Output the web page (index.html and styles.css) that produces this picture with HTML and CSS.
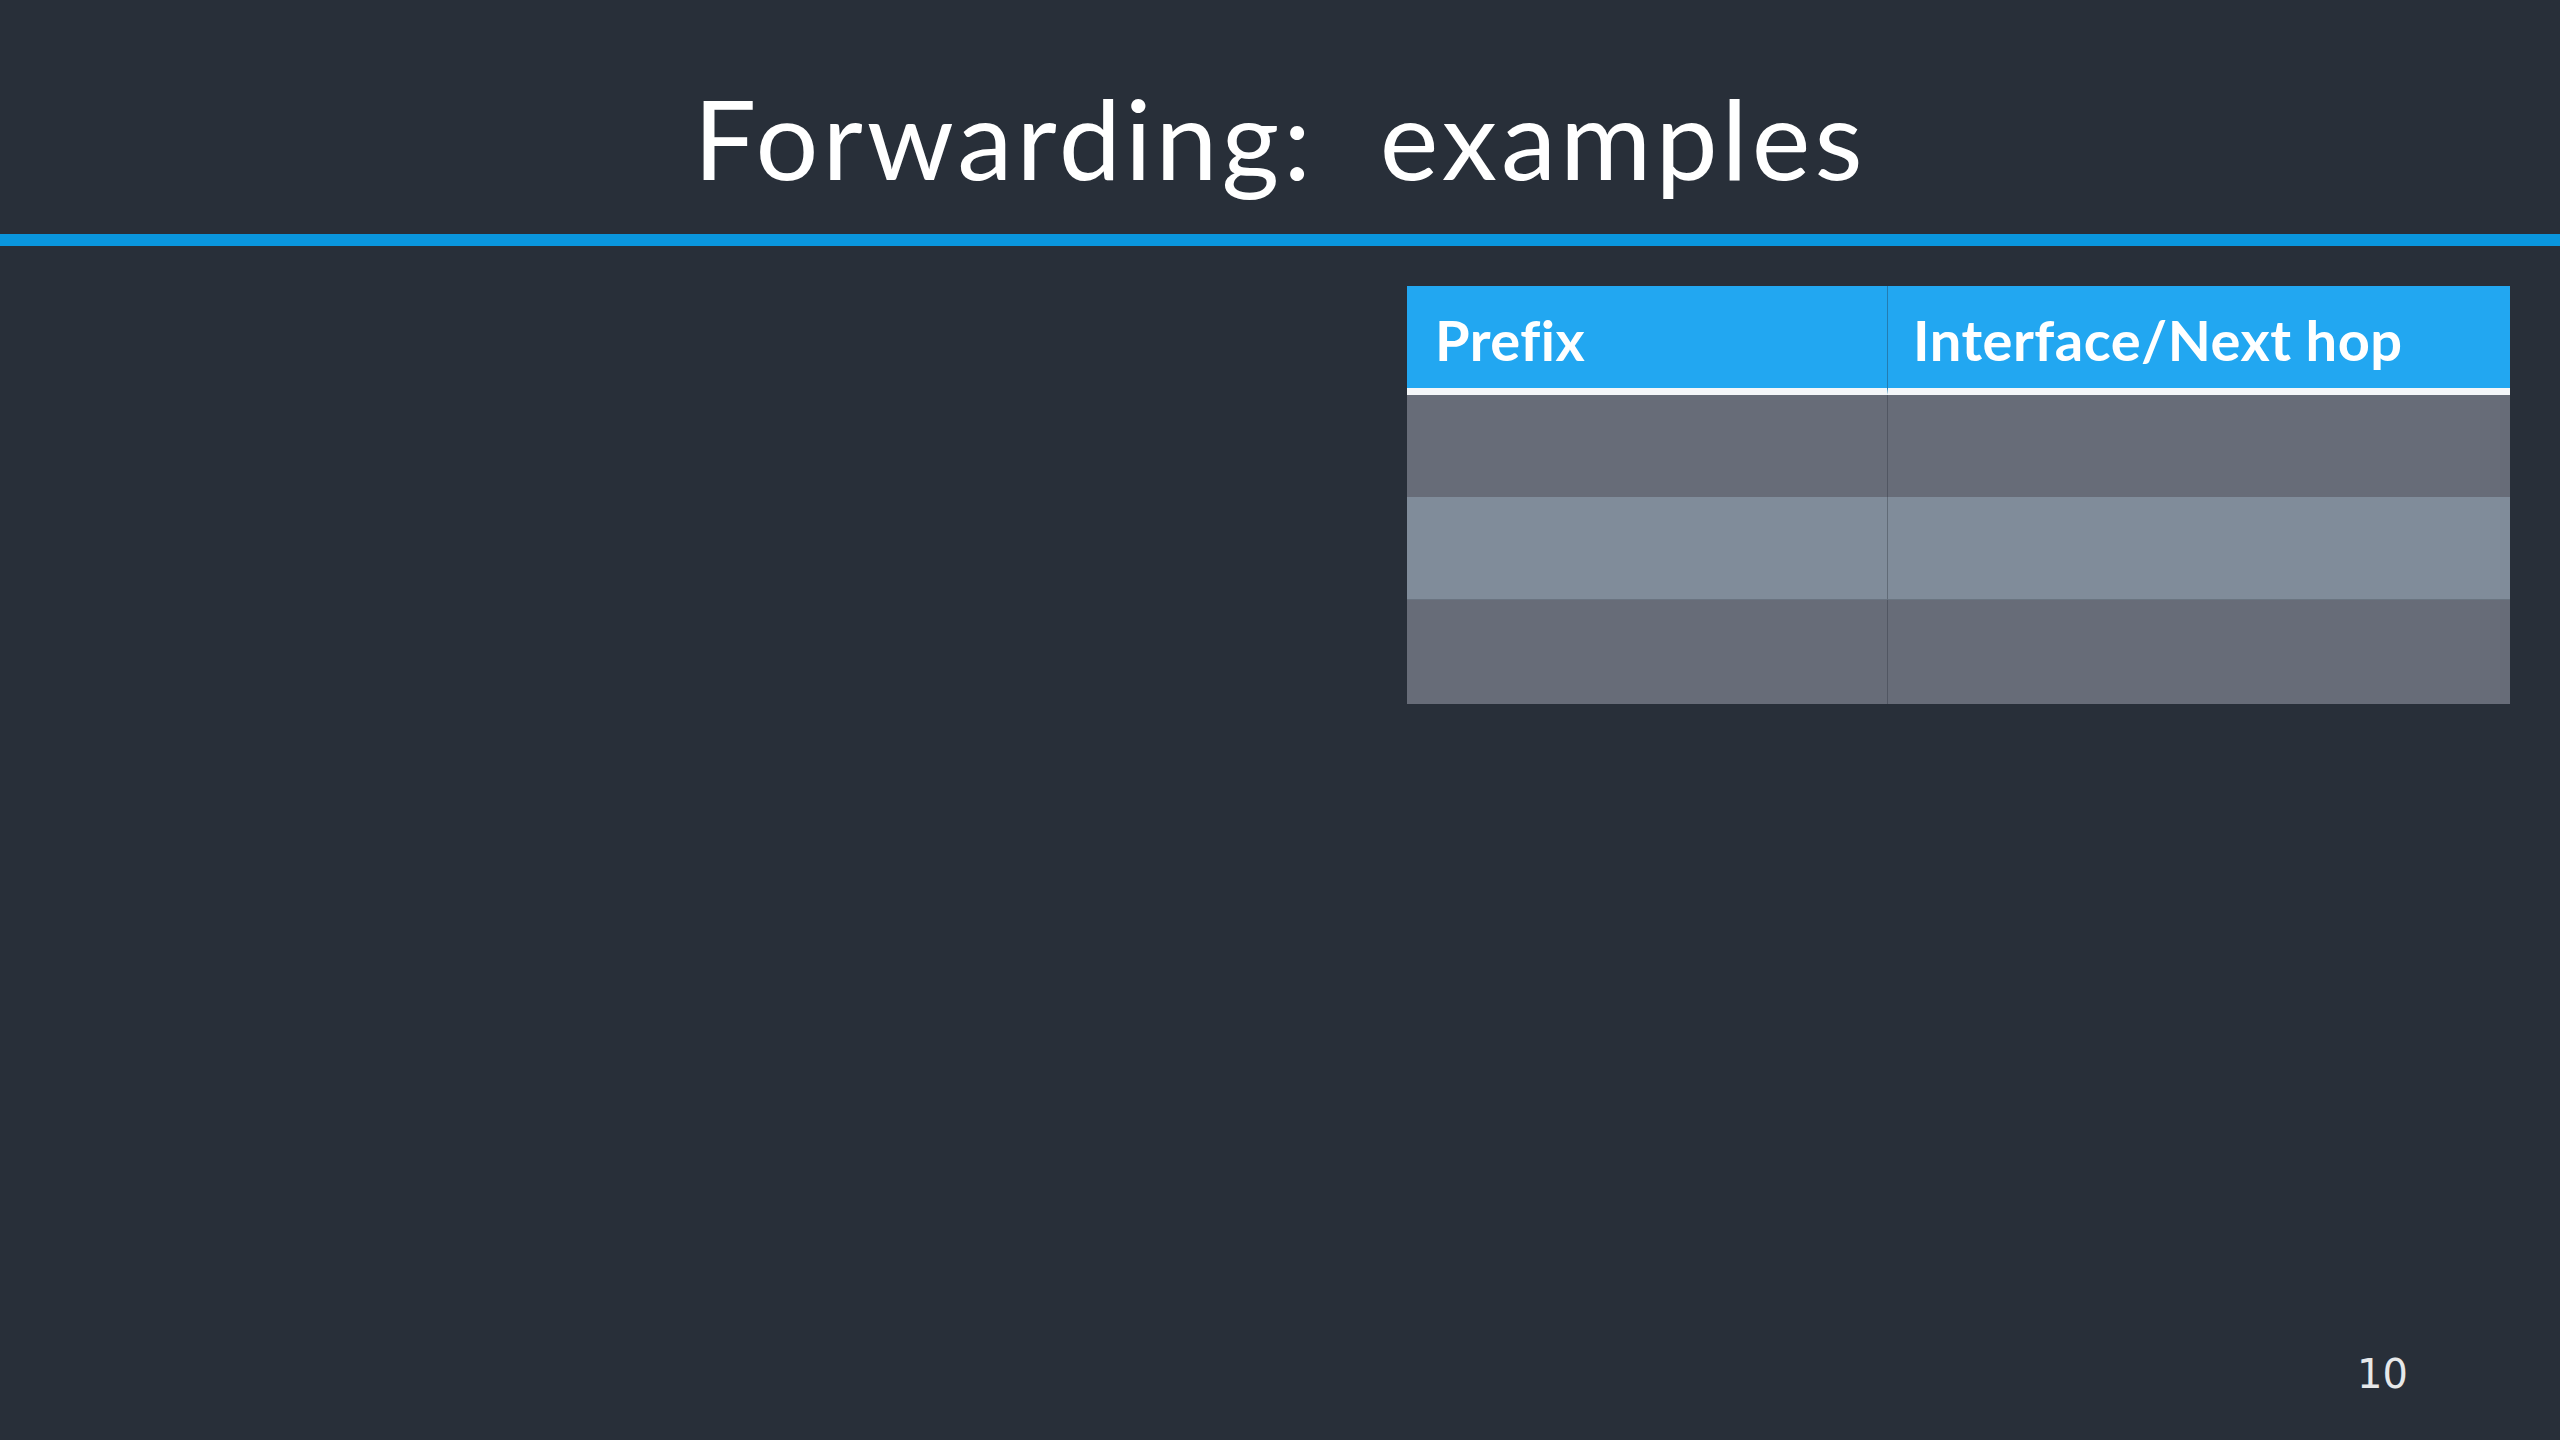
FILE: index.html
```html
<!DOCTYPE html>
<html>
<head>
<meta charset="utf-8">
<link rel="stylesheet" href="styles.css">
</head>
<body>
<div class="slide">
  <header class="title-bar">
    <h1 class="title">Forwarding:&nbsp; examples</h1>
  </header>
  <div class="rule"></div>
  <main class="content">
    <div class="table">
      <div class="cell head">Prefix</div>
      <div class="cell head">Interface/Next hop</div>
      <div class="cell dark"></div>
      <div class="cell dark"></div>
      <div class="cell light"></div>
      <div class="cell light"></div>
      <div class="cell dark"></div>
      <div class="cell dark"></div>
    </div>
  </main>
  <footer class="footer">
    <span class="page-num">10</span>
  </footer>
</div>
</body>
</html>
```
FILE: styles.css
```css
html, body {
  margin: 0;
  padding: 0;
  background: #282f39;
}
.slide {
  width: 2560px;
  height: 1440px;
  display: flex;
  flex-direction: column;
  background: #282f39;
  overflow: hidden;
}
.title-bar {
  height: 234px;
  box-sizing: border-box;
  padding-top: 82px;
}
.title {
  margin: 0;
  text-align: center;
  font-family: Lato, "Noto Sans", sans-serif;
  font-weight: 400;
  font-size: 111px;
  line-height: 1;
  letter-spacing: 4px;
  color: #ffffff;
  font-variant-ligatures: none;
}
.rule {
  height: 12px;
  background: #0a96dd;
}
.content {
  flex: 1;
  padding-top: 40px;
  padding-left: 1407px;
}
.table {
  width: 1103px;
  display: grid;
  grid-template-columns: 481px 622px;
  grid-template-rows: 109px 102px 103px 104px;
}
.cell {
  box-sizing: border-box;
}
.cell:nth-child(odd) {
  border-right: 1px solid rgba(40, 47, 57, 0.35);
}
.head {
  background: #22a7f1;
  border-bottom: 7px solid #f4f6f8;
  padding-left: 28px;
  padding-top: 3px;
  font-family: Lato, "Noto Sans", sans-serif;
  font-weight: 700;
  font-size: 56px;
  line-height: 102px;
  letter-spacing: 0.5px;
  color: #ffffff;
  white-space: nowrap;
  font-variant-ligatures: none;
}
.head:nth-child(2) {
  padding-left: 25px;
}
.dark {
  background: #676c78;
}
.light {
  background: #808c9a;
  border-bottom: 1px solid rgba(40, 47, 57, 0.25);
}
.footer {
  height: 110px;
  display: flex;
  justify-content: flex-end;
  padding-right: 152px;
}
.page-num {
  font-family: "DejaVu Sans", sans-serif;
  font-size: 40px;
  line-height: 1;
  color: #e6e8ea;
  margin-top: 24px;
}
```
